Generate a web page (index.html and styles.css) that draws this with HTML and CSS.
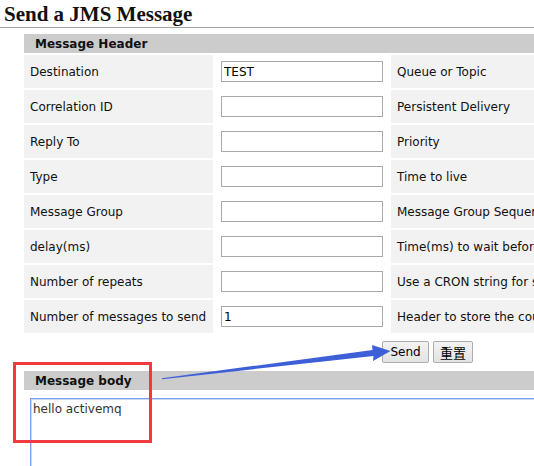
FILE: index.html
```html
<!DOCTYPE html>
<html lang="en">
<head>
<meta charset="utf-8">
<title>Send a JMS Message</title>
<link rel="stylesheet" href="styles.css">
</head>
<body>
<h1 class="title">Send a JMS Message</h1>
<form class="send-form">
  <table class="grid">
    <colgroup>
      <col class="c-label">
      <col class="c-input">
      <col class="c-help">
    </colgroup>
    <tr><th colspan="3" class="section">Message Header</th></tr>
    <tr><td class="label">Destination</td><td class="field"><input class="text" type="text" value="TEST"></td><td class="help">Queue or Topic</td></tr>
    <tr><td class="label">Correlation ID</td><td class="field"><input class="text" type="text"></td><td class="help">Persistent Delivery</td></tr>
    <tr><td class="label">Reply To</td><td class="field"><input class="text" type="text"></td><td class="help">Priority</td></tr>
    <tr><td class="label">Type</td><td class="field"><input class="text" type="text"></td><td class="help">Time to live</td></tr>
    <tr><td class="label">Message Group</td><td class="field"><input class="text" type="text"></td><td class="help">Message Group Sequence Number</td></tr>
    <tr><td class="label">delay(ms)</td><td class="field"><input class="text" type="text"></td><td class="help">Time(ms) to wait before scheduling the message for delivery</td></tr>
    <tr><td class="label">Number of repeats</td><td class="field"><input class="text" type="text"></td><td class="help">Use a CRON string for scheduling the message</td></tr>
    <tr><td class="label">Number of messages to send</td><td class="field"><input class="text" type="text" value="1"></td><td class="help">Header to store the counter</td></tr>
    <tr><td colspan="3" class="actions-cell"><div class="actions"><button type="button" class="btn btn-send">Send</button><button type="button" class="btn btn-reset">重置</button></div></td></tr>
  </table>
  <table class="grid">
    <colgroup>
      <col class="c-label">
      <col class="c-input">
      <col class="c-help">
    </colgroup>
    <tr><th colspan="3" class="section">Message body</th></tr>
    <tr><td colspan="3" class="body-cell"><textarea class="body-text">hello activemq</textarea></td></tr>
  </table>
</form>
<svg class="annot" width="534" height="466" viewBox="0 0 534 466" aria-hidden="true">
  <rect x="14.5" y="363.5" width="136" height="78" fill="none" stroke="#ef3b40" stroke-width="3"/>
  <polygon points="162,378.2 372.5,350 372,345 390.5,351 373,361 373.5,356 162,379.2" fill="#3d5fd8"/>
</svg>
</body>
</html>
```
FILE: styles.css
```css
html, body {
  margin: 0;
  padding: 0;
  overflow: hidden;
  background: #fff;
}
body {
  font-family: "DejaVu Sans", Verdana, sans-serif;
  font-size: 12px;
  color: #000;
}
.title {
  margin: 0;
  padding: 2px 0 0 4px;
  font-family: "Liberation Serif", "Times New Roman", serif;
  font-size: 21px;
  font-weight: bold;
  line-height: 25px;
  color: #111;
  border-bottom: 1px solid #a6a6a6;
}
.send-form {
  margin: 4px 0 0 22px;
}
.grid {
  table-layout: fixed;
  width: 811px;
  border-spacing: 2px;
  border-collapse: separate;
}
.c-label { width: 189px; }
.c-input { width: 174px; }
.c-help { width: 440px; }
.section {
  height: 19px;
  padding: 0 11px;
  background: #cccccc;
  text-align: left;
  font-weight: bold;
  font-size: 12px;
  color: #111;
  white-space: nowrap;
}
.label, .help, .field {
  height: 33px;
  padding: 0 6px;
  white-space: nowrap;
  overflow: hidden;
}
.label, .help {
  background: #f2f2f2;
  color: #111;
}
.field {
  background: #fff;
}
.text {
  display: block;
  box-sizing: border-box;
  width: 162px;
  height: 21px;
  margin: 0;
  padding: 1px 2px;
  border: 1px solid #a9a9a9;
  font-family: "DejaVu Sans", Verdana, sans-serif;
  font-size: 12px;
  color: #000;
  background: #fff;
}
.actions-cell {
  padding: 6px 0 4px;
}
.actions {
  display: flex;
  justify-content: center;
  gap: 4px;
}
.btn {
  box-sizing: border-box;
  height: 22px;
  margin: 0;
  padding: 0;
  border: 1px solid #adadad;
  border-radius: 2px;
  background: linear-gradient(#f3f3f3, #e3e3e3);
  font-family: "DejaVu Sans", "Noto Sans CJK SC", sans-serif;
  font-size: 12px;
  color: #000;
}
.btn-send { width: 47px; }
.btn-reset { width: 40px; font-family: "Noto Sans CJK SC", sans-serif; font-size: 13px; }
.body-cell {
  padding: 6px;
}
.body-text {
  display: block;
  box-sizing: border-box;
  width: 780px;
  height: 160px;
  margin: 0;
  padding: 3px 2px;
  border: 1px solid #7b9fe8;
  box-shadow: inset 1px 1px 0 #c9d8f7;
  font-family: "DejaVu Sans", Verdana, sans-serif;
  font-size: 12px;
  color: #333;
  resize: none;
  outline: none;
}
.annot {
  position: absolute;
  left: 0;
  top: 0;
  pointer-events: none;
}
```
